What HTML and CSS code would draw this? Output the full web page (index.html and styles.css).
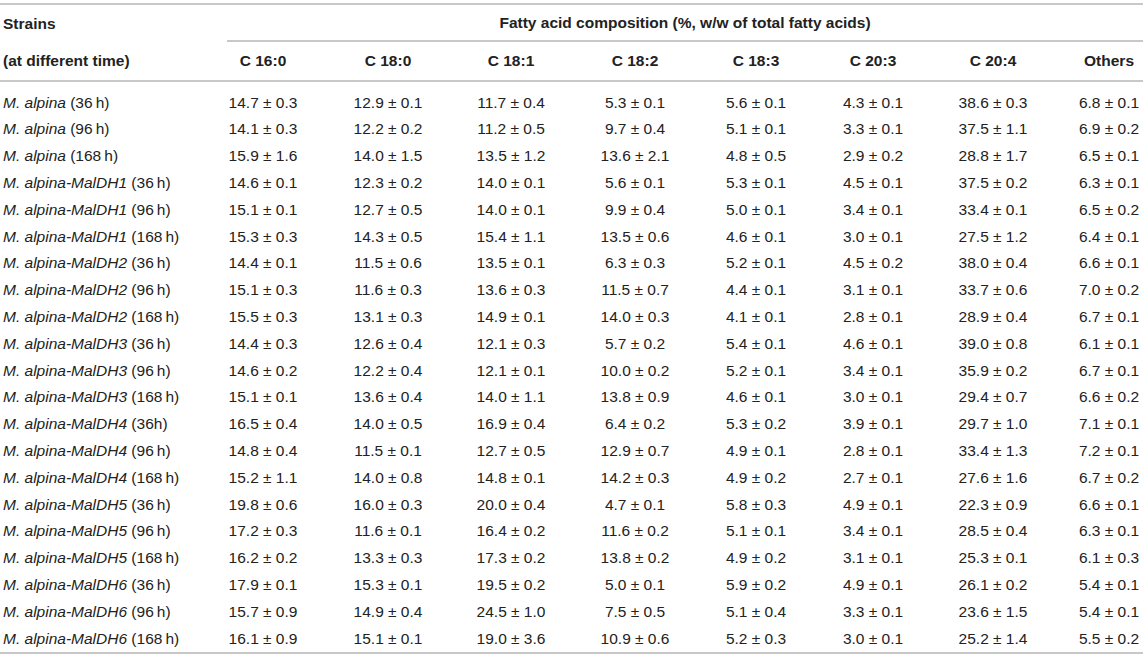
FILE: index.html
```html
<!DOCTYPE html>
<html lang="en">

<head>
    <meta charset="UTF-8">
    <title>Fatty acid composition of M. alpina strains</title>
    <link rel="stylesheet" href="styles.css">
</head>

<body>
    <table class="fa-table">
        <colgroup>
            <col class="c-strain">
            <col class="c-w126">
            <col class="c-w124">
            <col class="c-w122">
            <col class="c-w126">
            <col class="c-w116">
            <col class="c-w118">
            <col class="c-w122">
            <col class="c-w89">
        </colgroup>
        <thead>
            <tr class="head-top">
                <th class="strain">Strains</th>
                <th colspan="8" class="group"><div class="group-label">Fatty acid composition (%, w/w of total fatty acids)</div></th>
            </tr>
            <tr class="head-sub">
                <th class="strain">(at different time)</th>
                <th>C 16:0</th>
                <th>C 18:0</th>
                <th>C 18:1</th>
                <th>C 18:2</th>
                <th>C 18:3</th>
                <th>C 20:3</th>
                <th>C 20:4</th>
                <th class="last">Others</th>
            </tr>
        </thead>
        <tbody>
            <tr><td class="strain"><i>M. alpina</i> (36&#8201;h)</td><td>14.7 ± 0.3</td><td>12.9 ± 0.1</td><td>11.7 ± 0.4</td><td>5.3 ± 0.1</td><td>5.6 ± 0.1</td><td>4.3 ± 0.1</td><td>38.6 ± 0.3</td><td class="last">6.8 ± 0.1</td></tr>
            <tr><td class="strain"><i>M. alpina</i> (96&#8201;h)</td><td>14.1 ± 0.3</td><td>12.2 ± 0.2</td><td>11.2 ± 0.5</td><td>9.7 ± 0.4</td><td>5.1 ± 0.1</td><td>3.3 ± 0.1</td><td>37.5 ± 1.1</td><td class="last">6.9 ± 0.2</td></tr>
            <tr><td class="strain"><i>M. alpina</i> (168&#8201;h)</td><td>15.9 ± 1.6</td><td>14.0 ± 1.5</td><td>13.5 ± 1.2</td><td>13.6 ± 2.1</td><td>4.8 ± 0.5</td><td>2.9 ± 0.2</td><td>28.8 ± 1.7</td><td class="last">6.5 ± 0.1</td></tr>
            <tr><td class="strain"><i>M. alpina-MalDH1</i> (36&#8201;h)</td><td>14.6 ± 0.1</td><td>12.3 ± 0.2</td><td>14.0 ± 0.1</td><td>5.6 ± 0.1</td><td>5.3 ± 0.1</td><td>4.5 ± 0.1</td><td>37.5 ± 0.2</td><td class="last">6.3 ± 0.1</td></tr>
            <tr><td class="strain"><i>M. alpina-MalDH1</i> (96&#8201;h)</td><td>15.1 ± 0.1</td><td>12.7 ± 0.5</td><td>14.0 ± 0.1</td><td>9.9 ± 0.4</td><td>5.0 ± 0.1</td><td>3.4 ± 0.1</td><td>33.4 ± 0.1</td><td class="last">6.5 ± 0.2</td></tr>
            <tr><td class="strain"><i>M. alpina-MalDH1</i> (168&#8201;h)</td><td>15.3 ± 0.3</td><td>14.3 ± 0.5</td><td>15.4 ± 1.1</td><td>13.5 ± 0.6</td><td>4.6 ± 0.1</td><td>3.0 ± 0.1</td><td>27.5 ± 1.2</td><td class="last">6.4 ± 0.1</td></tr>
            <tr><td class="strain"><i>M. alpina-MalDH2</i> (36&#8201;h)</td><td>14.4 ± 0.1</td><td>11.5 ± 0.6</td><td>13.5 ± 0.1</td><td>6.3 ± 0.3</td><td>5.2 ± 0.1</td><td>4.5 ± 0.2</td><td>38.0 ± 0.4</td><td class="last">6.6 ± 0.1</td></tr>
            <tr><td class="strain"><i>M. alpina-MalDH2</i> (96&#8201;h)</td><td>15.1 ± 0.3</td><td>11.6 ± 0.3</td><td>13.6 ± 0.3</td><td>11.5 ± 0.7</td><td>4.4 ± 0.1</td><td>3.1 ± 0.1</td><td>33.7 ± 0.6</td><td class="last">7.0 ± 0.2</td></tr>
            <tr><td class="strain"><i>M. alpina-MalDH2</i> (168&#8201;h)</td><td>15.5 ± 0.3</td><td>13.1 ± 0.3</td><td>14.9 ± 0.1</td><td>14.0 ± 0.3</td><td>4.1 ± 0.1</td><td>2.8 ± 0.1</td><td>28.9 ± 0.4</td><td class="last">6.7 ± 0.1</td></tr>
            <tr><td class="strain"><i>M. alpina-MalDH3</i> (36&#8201;h)</td><td>14.4 ± 0.3</td><td>12.6 ± 0.4</td><td>12.1 ± 0.3</td><td>5.7 ± 0.2</td><td>5.4 ± 0.1</td><td>4.6 ± 0.1</td><td>39.0 ± 0.8</td><td class="last">6.1 ± 0.1</td></tr>
            <tr><td class="strain"><i>M. alpina-MalDH3</i> (96&#8201;h)</td><td>14.6 ± 0.2</td><td>12.2 ± 0.4</td><td>12.1 ± 0.1</td><td>10.0 ± 0.2</td><td>5.2 ± 0.1</td><td>3.4 ± 0.1</td><td>35.9 ± 0.2</td><td class="last">6.7 ± 0.1</td></tr>
            <tr><td class="strain"><i>M. alpina-MalDH3</i> (168&#8201;h)</td><td>15.1 ± 0.1</td><td>13.6 ± 0.4</td><td>14.0 ± 1.1</td><td>13.8 ± 0.9</td><td>4.6 ± 0.1</td><td>3.0 ± 0.1</td><td>29.4 ± 0.7</td><td class="last">6.6 ± 0.2</td></tr>
            <tr><td class="strain"><i>M. alpina-MalDH4</i> (36h)</td><td>16.5 ± 0.4</td><td>14.0 ± 0.5</td><td>16.9 ± 0.4</td><td>6.4 ± 0.2</td><td>5.3 ± 0.2</td><td>3.9 ± 0.1</td><td>29.7 ± 1.0</td><td class="last">7.1 ± 0.1</td></tr>
            <tr><td class="strain"><i>M. alpina-MalDH4</i> (96&#8201;h)</td><td>14.8 ± 0.4</td><td>11.5 ± 0.1</td><td>12.7 ± 0.5</td><td>12.9 ± 0.7</td><td>4.9 ± 0.1</td><td>2.8 ± 0.1</td><td>33.4 ± 1.3</td><td class="last">7.2 ± 0.1</td></tr>
            <tr><td class="strain"><i>M. alpina-MalDH4</i> (168&#8201;h)</td><td>15.2 ± 1.1</td><td>14.0 ± 0.8</td><td>14.8 ± 0.1</td><td>14.2 ± 0.3</td><td>4.9 ± 0.2</td><td>2.7 ± 0.1</td><td>27.6 ± 1.6</td><td class="last">6.7 ± 0.2</td></tr>
            <tr><td class="strain"><i>M. alpina-MalDH5</i> (36&#8201;h)</td><td>19.8 ± 0.6</td><td>16.0 ± 0.3</td><td>20.0 ± 0.4</td><td>4.7 ± 0.1</td><td>5.8 ± 0.3</td><td>4.9 ± 0.1</td><td>22.3 ± 0.9</td><td class="last">6.6 ± 0.1</td></tr>
            <tr><td class="strain"><i>M. alpina-MalDH5</i> (96&#8201;h)</td><td>17.2 ± 0.3</td><td>11.6 ± 0.1</td><td>16.4 ± 0.2</td><td>11.6 ± 0.2</td><td>5.1 ± 0.1</td><td>3.4 ± 0.1</td><td>28.5 ± 0.4</td><td class="last">6.3 ± 0.1</td></tr>
            <tr><td class="strain"><i>M. alpina-MalDH5</i> (168&#8201;h)</td><td>16.2 ± 0.2</td><td>13.3 ± 0.3</td><td>17.3 ± 0.2</td><td>13.8 ± 0.2</td><td>4.9 ± 0.2</td><td>3.1 ± 0.1</td><td>25.3 ± 0.1</td><td class="last">6.1 ± 0.3</td></tr>
            <tr><td class="strain"><i>M. alpina-MalDH6</i> (36&#8201;h)</td><td>17.9 ± 0.1</td><td>15.3 ± 0.1</td><td>19.5 ± 0.2</td><td>5.0 ± 0.1</td><td>5.9 ± 0.2</td><td>4.9 ± 0.1</td><td>26.1 ± 0.2</td><td class="last">5.4 ± 0.1</td></tr>
            <tr><td class="strain"><i>M. alpina-MalDH6</i> (96&#8201;h)</td><td>15.7 ± 0.9</td><td>14.9 ± 0.4</td><td>24.5 ± 1.0</td><td>7.5 ± 0.5</td><td>5.1 ± 0.4</td><td>3.3 ± 0.1</td><td>23.6 ± 1.5</td><td class="last">5.4 ± 0.1</td></tr>
            <tr><td class="strain"><i>M. alpina-MalDH6</i> (168&#8201;h)</td><td>16.1 ± 0.9</td><td>15.1 ± 0.1</td><td>19.0 ± 3.6</td><td>10.9 ± 0.6</td><td>5.2 ± 0.3</td><td>3.0 ± 0.1</td><td>25.2 ± 1.4</td><td class="last">5.5 ± 0.2</td></tr>
        </tbody>
    </table>
</body>

</html>
```

FILE: styles.css
```css
body {
    font-family: "Liberation Sans", Arial, sans-serif;
    color: #222;
    background: #fff;
    margin: 0;
    padding: 3px 0 0 0;
}

.fa-table {
    width: 1143px;
    border-collapse: collapse;
    table-layout: fixed;
    font-size: 15.5px;
    line-height: 17px;
    border-top: 2px solid #c8c8c8;
    border-bottom: 2px solid #c8c8c8;
}

.c-strain { width: 200px; }
.c-w126 { width: 126px; }
.c-w124 { width: 124px; }
.c-w122 { width: 122px; }
.c-w116 { width: 116px; }
.c-w118 { width: 118px; }
.c-w89 { width: 89px; }

.fa-table th,
.fa-table td {
    padding: 0;
    text-align: center;
    white-space: nowrap;
}

.fa-table th {
    font-weight: bold;
}

.fa-table .strain {
    text-align: left;
    padding-left: 3px;
}

.fa-table .last {
    padding-left: 21px;
}

.head-top th {
    height: 35px;
    vertical-align: middle;
}

.head-top th.group {
    vertical-align: bottom;
}

.group-label {
    margin-left: 27px;
    padding: 9px 0 9px 0;
    border-bottom: 2px solid #c8c8c8;
    margin-bottom: -1px;
}

.head-sub th {
    height: 39px;
    border-bottom: 2px solid #c8c8c8;
}

.fa-table tbody td {
    line-height: 26.8px;
}

.fa-table tbody tr:first-child td {
    padding-top: 7.6px;
}
```
